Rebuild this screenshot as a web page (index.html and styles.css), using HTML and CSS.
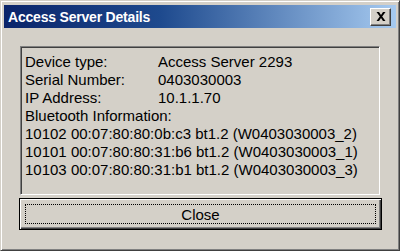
FILE: index.html
```html
<!DOCTYPE html>
<html>
<head>
<meta charset="utf-8">
<link rel="stylesheet" href="styles.css">
</head>
<body>
<div class="window">
  <div class="titlebar">
    <span class="title">Access Server Details</span>
    <span class="xbtn"><svg width="10" height="9" viewBox="0 0 10 9"><path d="M0.5 0h2.5l2 3 2-3h2.5L6.2 4.5 9.5 9H7L5 6 3 9H0.5l3.3-4.5z" fill="#000"/></svg></span>
  </div>
  <div class="content">
    <div class="panel">
      <div class="row"><span class="lbl">Device type:</span><span>Access Server 2293</span></div>
      <div class="row"><span class="lbl">Serial Number:</span><span>0403030003</span></div>
      <div class="row"><span class="lbl">IP Address:</span><span>10.1.1.70</span></div>
      <div class="row">Bluetooth Information:</div>
      <div class="row">10102 00:07:80:80:0b:c3 bt1.2 (W0403030003_2)</div>
      <div class="row">10101 00:07:80:80:31:b6 bt1.2 (W0403030003_1)</div>
      <div class="row">10103 00:07:80:80:31:b1 bt1.2 (W0403030003_3)</div>
    </div>
    <div class="btn"><div class="focus">Close</div></div>
  </div>
</div>
</body>
</html>
```
FILE: styles.css
```css
html, body { margin: 0; padding: 0; background: #d4d0c8; }
.window {
  width: 400px; height: 251px; box-sizing: border-box;
  background: #d4d0c8;
  border-top: 1px solid #d4d0c8; border-left: 1px solid #d4d0c8;
  border-right: 1px solid #404040; border-bottom: 1px solid #404040;
  box-shadow: inset 1px 1px 0 #fff, inset -1px -1px 0 #808080;
  padding: 4px 3px 3px 3px;
  display: flex; flex-direction: column;
}
.titlebar {
  height: 23px; flex: none;
  background: linear-gradient(to right, #0a246a 0%, #1e4a8e 40%, #a6caf0 100%);
  display: flex; align-items: center; justify-content: space-between;
  padding: 0 5px 0 4px;
}
.title {
  font-family: "Liberation Sans", Arial, sans-serif; font-weight: bold;
  font-size: 14px; color: #fff; letter-spacing: -0.2px;
}
.xbtn {
  width: 21px; height: 18px; box-sizing: border-box;
  background: #d4d0c8;
  border-top: 1px solid #fff; border-left: 1px solid #fff;
  border-right: 1px solid #404040; border-bottom: 1px solid #404040;
  box-shadow: inset -1px -1px 0 #808080;
  display: flex; align-items: center; justify-content: center;
}
.content {
  flex: 1; display: flex; flex-direction: column;
  padding: 18px 16px 0 16px;
}
.panel {
  height: 149px; box-sizing: border-box;
  border-top: 1px solid #808080; border-left: 1px solid #808080;
  border-right: 1px solid #fff; border-bottom: 1px solid #fff;
  box-shadow: inset 1px 1px 0 #404040, inset -1px -1px 0 #d4d0c8;
  padding: 6px 4px 0 4px;
  font-family: "Liberation Sans", Arial, sans-serif; font-size: 15px;
  color: #000; line-height: 18px;
}
.row { display: flex; white-space: nowrap; }
.lbl { width: 133px; }
.btn {
  margin-top: 3px; margin-left: -1px; margin-right: -2px;
  height: 32px; box-sizing: border-box;
  border: 1px solid #000;
  box-shadow: inset 1px 1px 0 #fff, inset -1px -1px 0 #404040, inset -2px -2px 0 #808080;
  padding: 5px;
  font-family: "Liberation Sans", Arial, sans-serif; font-size: 15px; color: #000;
}
.focus {
  height: 100%; box-sizing: border-box;
  border: 1px dotted #000;
  display: flex; align-items: center; justify-content: center;
}
```
